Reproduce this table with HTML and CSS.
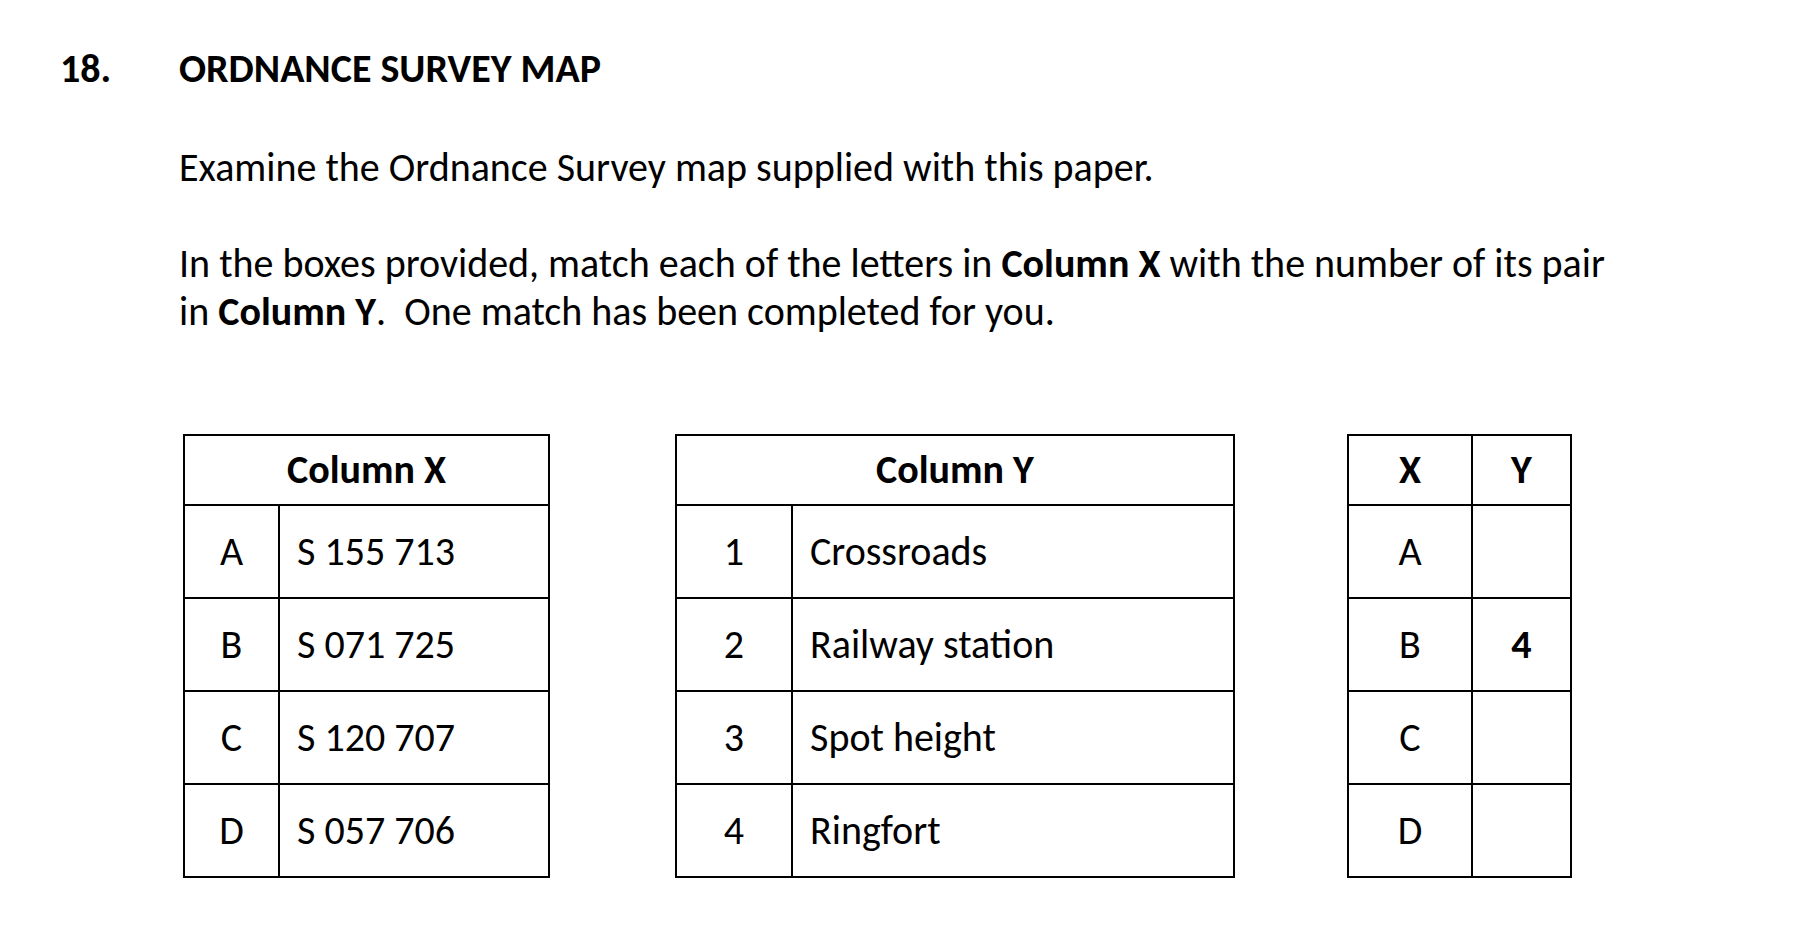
FILE: index.html
```html
<!DOCTYPE html>
<html lang="en">
<head>
<meta charset="utf-8">
<title>Ordnance Survey Map</title>
<link rel="stylesheet" href="styles.css">
</head>
<body>
<div class="question">
  <div class="qnum">18.</div>
  <div class="qbody">
    <h1 class="title">ORDNANCE SURVEY MAP</h1>
    <p class="para">Examine the Ordnance Survey map supplied with this paper.</p>
    <p class="para">In the boxes provided, match each of the letters in <b>Column X</b> with the number of its pair<br>in <b>Column Y</b>.&nbsp; One match has been completed for you.</p>
    <div class="tables">
      <table class="grid grid-x">
        <colgroup><col class="col-key"><col class="col-val"></colgroup>
        <tr><th colspan="2">Column X</th></tr>
        <tr><td class="key">A</td><td class="val">S 155 713</td></tr>
        <tr><td class="key">B</td><td class="val">S 071 725</td></tr>
        <tr><td class="key">C</td><td class="val">S 120 707</td></tr>
        <tr><td class="key">D</td><td class="val">S 057 706</td></tr>
      </table>
      <table class="grid grid-y">
        <colgroup><col class="col-key"><col class="col-val"></colgroup>
        <tr><th colspan="2">Column Y</th></tr>
        <tr><td class="key">1</td><td class="val">Crossroads</td></tr>
        <tr><td class="key">2</td><td class="val">Railway station</td></tr>
        <tr><td class="key">3</td><td class="val">Spot height</td></tr>
        <tr><td class="key">4</td><td class="val">Ringfort</td></tr>
      </table>
      <table class="grid grid-xy">
        <colgroup><col class="col-key"><col class="col-val"></colgroup>
        <tr><th>X</th><th>Y</th></tr>
        <tr><td class="key">A</td><td class="key"></td></tr>
        <tr><td class="key">B</td><td class="key answer">4</td></tr>
        <tr><td class="key">C</td><td class="key"></td></tr>
        <tr><td class="key">D</td><td class="key"></td></tr>
      </table>
    </div>
  </div>
</div>
</body>
</html>
```

FILE: styles.css
```css
html, body {
  margin: 0;
  padding: 0;
  background: #ffffff;
}

body {
  font-family: Carlito, Lato, "Liberation Sans", sans-serif;
  font-size: 40px;
  line-height: 48px;
  color: #000000;
}

.question {
  display: flex;
  padding: 45px 0 0 60px;
}

.qnum {
  width: 119px;
  flex: none;
  font-weight: bold;
}

.qbody {
  flex: 1;
}

.title {
  margin: 0;
  font-size: 40px;
  line-height: 48px;
  font-weight: bold;
}

.para {
  margin: 51px 0 0 0;
  white-space: nowrap;
}

.para + .para {
  margin-top: 48px;
}

.tables {
  display: flex;
  margin-top: 98px;
  padding-left: 4px;
}

.grid {
  border-collapse: collapse;
  table-layout: fixed;
}

.grid th,
.grid td {
  border: 2px solid #000000;
  padding: 0;
}

.grid th {
  height: 68px;
  font-weight: bold;
  text-align: center;
}

.grid td {
  height: 91px;
}

.key {
  text-align: center;
}

.grid td.val {
  text-align: left;
  padding-left: 17px;
}

.grid-x {
  width: 367px;
}

.grid-x .col-key {
  width: 95px;
}

.grid-y {
  width: 560px;
  margin-left: 125px;
}

.grid-y .col-key {
  width: 116px;
}

.grid-xy {
  width: 225px;
  margin-left: 112px;
}

.grid-xy .col-key {
  width: 124px;
}

.answer {
  font-weight: bold;
}
```
